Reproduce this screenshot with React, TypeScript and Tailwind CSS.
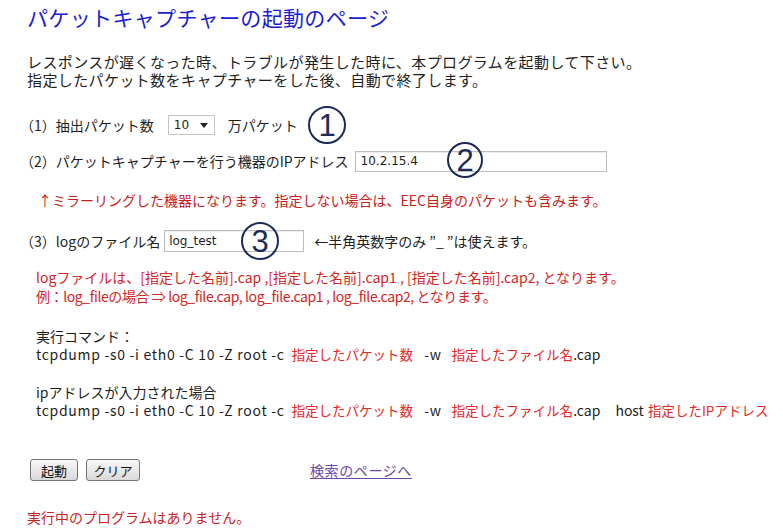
import React from "react";

function Circled({ n, className }: { n: string; className: string }) {
  return (
    <span
      className={`absolute flex items-center justify-center rounded-full border-2 border-[#1c2a5a] bg-transparent font-['Liberation_Sans',sans-serif] text-[31px] leading-none text-[#1c2a5a] ${className}`}
    >
      {n}
    </span>
  );
}

const red = "text-[13.5px] text-[#e82626]";

function Command({ withHost }: { withHost?: boolean }) {
  return (
    <div className="flex items-baseline whitespace-nowrap">
      <span className="tracking-[0.7px]">tcpdump -s0 -i eth0 -C 10 -Z root -c</span>
      <span className={`ml-[7px] ${red}`}>指定したパケット数</span>
      <span className="ml-[11px] tracking-[0.7px]">-w</span>
      <span className={`ml-[10px] ${red}`}>指定したファイル名</span>
      <span>.cap</span>
      {withHost ? (
        <>
          <span className="ml-[15px]">host</span>
          <span className={`ml-[4px] ${red}`}>指定したIPアドレス</span>
        </>
      ) : null}
    </div>
  );
}

export default function App() {
  return (
    <div className="relative h-[529px] w-[783px] overflow-hidden bg-white font-['Noto_Sans_CJK_JP',sans-serif] text-[14px] text-[#1e1e1e]">
      <h1 className="pl-[27px] pt-[5px] text-[21px] leading-[24px] tracking-[0.35px] text-[#1c1cd2]">
        パケットキャプチャーの起動のページ
      </h1>

      <p className="mt-[24px] pl-[27px] text-[15px] leading-[18px] tracking-[0.4px]">
        レスポンスが遅くなった時、トラブルが発生した時に、本プログラムを起動して下さい。
        <br />
        指定したパケット数をキャプチャーをした後、自動で終了します。
      </p>

      {/* (1) */}
      <div className="relative mt-[25px] flex h-[22px] items-center pl-[20px]">
        <span>（1）抽出パケット数</span>
        <div className="ml-[14px] flex h-[20px] w-[47px] items-center justify-between border border-[#c4c4c4] bg-white pl-[5px] pr-[6px] font-['DejaVu_Sans',sans-serif] text-[12px]">
          <span>10</span>
          <svg width="8" height="5" viewBox="0 0 8 5">
            <path d="M0 0h8L4 5z" fill="#222" />
          </svg>
        </div>
        <span className="ml-[13px]">万パケット</span>
        <Circled n="1" className="left-[308px] top-[-8px] h-[38px] w-[38px]" />
      </div>

      {/* (2) */}
      <div className="relative mt-[14px] flex h-[22px] items-center pl-[20px]">
        <span>（2）パケットキャプチャーを行う機器のIPアドレス</span>
        <div className="ml-[6px] flex h-[21px] w-[252px] items-center border border-[#bdbdbd] bg-white pl-[5px] font-['DejaVu_Sans',sans-serif] text-[12px] shadow-[inset_0_1px_1px_rgba(0,0,0,0.08)]">
          10.2.15.4
        </div>
        <Circled n="2" className="left-[447px] top-[-8px] h-[36px] w-[36px]" />
      </div>

      <p className="mt-[19px] pl-[38px] leading-[18px] text-[#c82020]">
        ↑ミラーリングした機器になります。指定しない場合は、EEC自身のパケットも含みます。
      </p>

      {/* (3) */}
      <div className="relative mt-[21px] flex h-[22px] items-center pl-[20px]">
        <span>（3）logのファイル名</span>
        <div className="ml-[4px] flex h-[22px] w-[140px] items-center border border-[#bdbdbd] bg-white pl-[4px] font-['DejaVu_Sans',sans-serif] text-[12px] shadow-[inset_0_1px_1px_rgba(0,0,0,0.08)]">
          log_test
        </div>
        <span className="ml-[10px]">←半角英数字のみ ”_ ”は使えます。</span>
        <Circled n="3" className="left-[241px] top-[-8px] h-[38px] w-[38px]" />
      </div>

      <div className="mt-[16px] pl-[36px] leading-[19px] text-[#d42424]">
        <div className="whitespace-nowrap">
          logファイルは、[指定した名前].cap ,[指定した名前].cap1 , [指定した名前].cap2, となります。
        </div>
        <div className="whitespace-nowrap tracking-[-0.4px]">
          例：log_fileの場合 ⇒ log_file.cap, log_file.cap1 , log_file.cap2, となります。
        </div>
      </div>

      <div className="mt-[21px] pl-[36px] leading-[18px]">
        <div>実行コマンド：</div>
        <Command />
      </div>

      <div className="mt-[20px] pl-[36px] leading-[18px]">
        <div>ipアドレスが入力された場合</div>
        <Command withHost />
      </div>

      <div className="mt-[40px] flex items-center pl-[30px]">
        <button className="h-[22px] w-[48px] rounded-[3px] border border-[#767676] bg-gradient-to-b from-[#f8f8f8] to-[#d9d9d9] text-[13px] leading-none text-[#111]">
          起動
        </button>
        <button className="ml-[8px] h-[22px] w-[54px] rounded-[3px] border border-[#767676] bg-gradient-to-b from-[#f8f8f8] to-[#d9d9d9] text-[13px] leading-none text-[#111]">
          クリア
        </button>
        <a href="#" className="ml-[170px] text-[14px] tracking-[0.6px] text-[#6a48a8] underline underline-offset-2">
          検索のページへ
        </a>
      </div>

      <p className="mt-[27px] pl-[27px] leading-[18px] text-[#c82424]">実行中のプログラムはありません。</p>
    </div>
  );
}
